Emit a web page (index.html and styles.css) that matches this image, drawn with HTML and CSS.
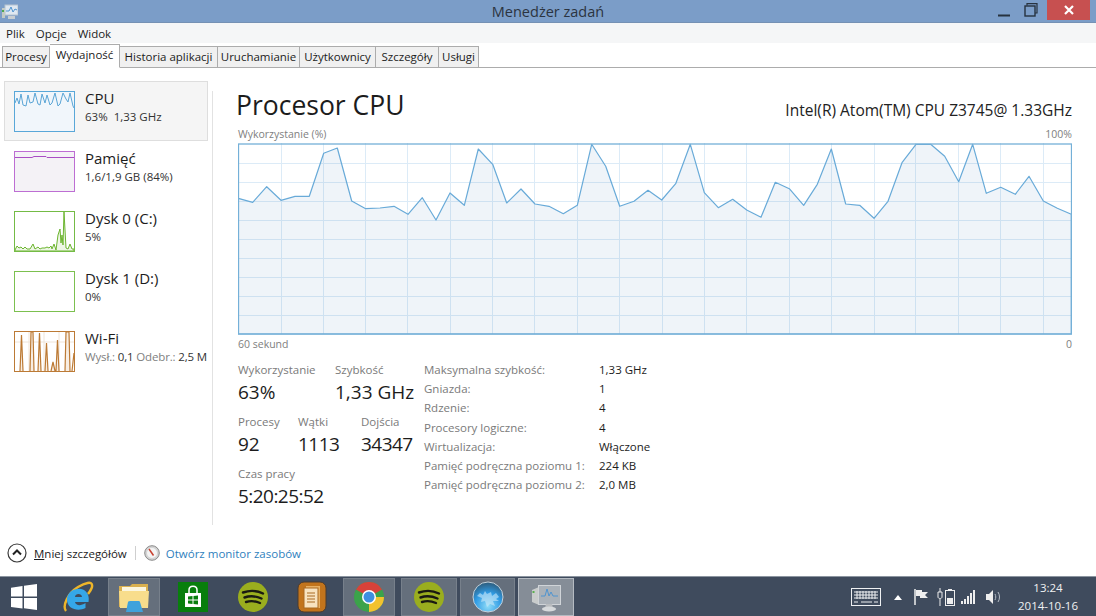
FILE: index.html
```html
<!DOCTYPE html>
<html lang="pl">
<head>
  <meta charset="UTF-8" />
  <title>Menedżer zadań</title>
  <link rel="stylesheet" href="styles.css">
</head>
<body>
  <svg class="defs" width="0" height="0">
    <symbol id="spotify" viewBox="0 0 30 30">
      <circle cx="15" cy="15" r="15" fill="#9aae1e"/>
      <path d="M5 10.500C12 8 19 8.500 25 11.500M6.500 15.500C12 13.500 18 14 23.500 16.500M8 20C13 18.500 17.500 19 22 21" fill="none" stroke="#1a1a12" stroke-width="2.400" stroke-linecap="round"/>
    </symbol>
  </svg>

  <header class="titlebar">
    <svg class="app-icon" width="16" height="16" viewBox="0 0 16 16">
      <rect x="3" y="1" width="13" height="10" fill="#dfe8f2" stroke="#b8c4cf"/>
      <path d="M4 7L7 7L9 3L11 8L13 5L15 6" fill="none" stroke="#4f94d0"/>
      <rect x="0" y="4" width="3" height="10" fill="#c4cbc4"/>
      <rect x="0" y="6" width="2" height="2" fill="#4fa84f"/>
      <rect x="6" y="12" width="7" height="3" fill="#c9ced2"/>
    </svg>
    <span class="title">Menedżer zadań</span>
    <div class="winbtns">
      <span class="winbtn"><svg width="14" height="14" viewBox="0 0 14 14"><path d="M1 12.500H13" stroke="#27323f" stroke-width="2"/></svg></span>
      <span class="winbtn"><svg width="14" height="14" viewBox="0 0 14 14"><path d="M3 2.500V.7H13V10H11" fill="none" stroke="#27323f" stroke-width="1.200"/><rect x="1" y="3" width="10" height="10" fill="none" stroke="#27323f" stroke-width="1.400"/></svg></span>
      <span class="winbtn close"><svg width="10" height="10" viewBox="0 0 10 10"><path d="M1 1L9 9M9 1L1 9" stroke="#fff" stroke-width="2.200"/></svg></span>
    </div>
  </header>

  <nav class="menu">
    <span>Plik</span><span>Opcje</span><span>Widok</span>
  </nav>

  <div class="tabs">
    <span class="tab">Procesy</span>
    <span class="tab active">Wydajność</span>
    <span class="tab">Historia aplikacji</span>
    <span class="tab">Uruchamianie</span>
    <span class="tab">Użytkownicy</span>
    <span class="tab">Szczegóły</span>
    <span class="tab">Usługi</span>
  </div>

  <div class="content">
    <aside class="sidebar">
      <div class="item selected">
        <svg class="thumb" width="61" height="41" viewBox="0 0 61 41">
          <rect x=".5" y=".5" width="60" height="40" fill="#f1f6fb"/>
          <path d="M1 12L3 7L5 13L7 3L9 14L12 15L14 4L16 12L19 11L21 2L24 13L26 14L28 3L31 12L33 4L36 14L38 12L41 2L44 15L46 13L49 2L52 8L54 11L56 2L59 15L60 17" fill="none" stroke="#5aa5d6"/>
          <rect x=".5" y=".5" width="60" height="40" fill="none" stroke="#59a7d8"/>
        </svg>
        <div class="item-text">
          <div class="item-name">CPU</div>
          <div class="item-sub">63%&nbsp; 1,33 GHz</div>
        </div>
      </div>
      <div class="item">
        <svg class="thumb" width="61" height="41" viewBox="0 0 61 41">
          <rect x=".5" y=".5" width="60" height="40" fill="#f4f2f6"/>
          <path d="M1 6.500H18L20 5.500H32L33 6.500H60" fill="none" stroke="#a94ec4"/>
          <rect x=".5" y=".5" width="60" height="40" fill="none" stroke="#bd6ed3"/>
        </svg>
        <div class="item-text">
          <div class="item-name">Pamięć</div>
          <div class="item-sub">1,6/1,9 GB (84%)</div>
        </div>
      </div>
      <div class="item">
        <svg class="thumb" width="61" height="41" viewBox="0 0 61 41">
          <rect x=".5" y=".5" width="60" height="40" fill="#fff"/>
          <path d="M1 39L3 35L5 37L7 36L9 38L11 36L13 38L16 38L19 33L21 38L24 36L26 38L28 37L31 37L33 36L35 37L37 35L38 38L40 33L42 39L44 24L46 18L47 32L48 24L49 34L50 1L52 37L54 38L56 33L58 38L60 38V40H1Z" fill="#edf6e5" stroke="#6cb52f"/>
          <rect x=".5" y=".5" width="60" height="40" fill="none" stroke="#74bb45"/>
        </svg>
        <div class="item-text">
          <div class="item-name">Dysk 0 (C:)</div>
          <div class="item-sub">5%</div>
        </div>
      </div>
      <div class="item">
        <svg class="thumb" width="61" height="41" viewBox="0 0 61 41">
          <rect x=".5" y=".5" width="60" height="40" fill="#fff" stroke="#7cc04f"/>
        </svg>
        <div class="item-text">
          <div class="item-name">Dysk 1 (D:)</div>
          <div class="item-sub">0%</div>
        </div>
      </div>
      <div class="item">
        <svg class="thumb" width="61" height="41" viewBox="0 0 61 41">
          <rect x=".5" y=".5" width="60" height="40" fill="#fff"/>
          <path d="M1 11H60M15 1V40M30 1V40M45 1V40" stroke="#efe4d8" fill="none"/>
          <path d="M6 40L7.500 4L9 40M16 40L17 1L19 1L20 40M24 40L25.500 2L27 40M31 40L32.500 12L34 40M37 40L39 31L41 40M42 40L43.500 9L45 40M51 40L52 1L55 1L56 40M58 40L60 22" fill="#f8eee3" stroke="#bc7a35" stroke-width="1.200"/>
          <rect x=".5" y=".5" width="60" height="40" fill="none" stroke="#bc7a35"/>
        </svg>
        <div class="item-text">
          <div class="item-name">Wi-Fi</div>
          <div class="item-sub wifi"><span class="muted">Wysł.:</span> 0,1 <span class="muted">Odebr.:</span> 2,5 M</div>
        </div>
      </div>
    </aside>
    <div class="divider"></div>

    <main class="main">
      <div class="heading">
        <h1>Procesor CPU</h1>
        <div class="model">Intel(R) Atom(TM) CPU Z3745@ 1.33GHz</div>
      </div>
      <div class="axis">
        <span>Wykorzystanie (%)</span><span>100%</span>
      </div>
      <svg class="graph" width="834" height="192" viewBox="238 143 834 192">
        <path class="grid" d="M238 163.500H1072M238 182.500H1072M238 201.500H1072M238 220.500H1072M238 239.500H1072M238 258.500H1072M238 277.500H1072M238 296.500H1072M238 315.500H1072M281.500 143V334M323.500 143V334M365.500 143V334M407.500 143V334M450.500 143V334M492.500 143V334M534.500 143V334M577.500 143V334M619.500 143V334M662.500 143V334M704.500 143V334M746.500 143V334M789.500 143V334M831.500 143V334M874.500 143V334M915.500 143V334M958.500 143V334M1000.500 143V334M1043.500 143V334"/>
        <path class="area" d="M238.300 198.300L252.700 202.300L266.700 186.700L281 200.300L295 196.300L309.300 196.300L323.700 153.300L337.300 148L351.700 201L365.700 208.700L380 208L394 206.300L408 214.300L422.300 197.700L436 220L450 193L464.300 205.300L478.300 149L492.700 164.300L506.700 203L521 189L535 204L549 206.300L563.300 213.700L577.300 205.300L591.700 144.300L605.700 166.300L619.700 206.300L634 201.300L648 190.300L661.700 200L675.700 183.700L690.300 144.300L704.300 192.700L718.300 207.700L732.700 199.300L746.700 210L761 217.300L775.300 182.300L789.300 188.700L803.700 205.300L817.300 184.300L831.300 149L845.700 204L859.700 205.300L874 218.300L888 201.300L902 162.700L916 144.300L930.700 144.300L944.700 156.300L958.700 181.700L972.700 144.300L986.300 193.300L1000.700 187.300L1015.300 194.300L1029 176.300L1043.300 201L1057.300 208.300L1071.300 214.300V334H238Z"/>
        <rect class="frame" x="238.500" y="144" width="833" height="190"/>
      </svg>
      <div class="axis axis-bottom">
        <span>60 sekund</span><span>0</span>
      </div>

      <div class="stats">
        <div class="stats-left">
          <div class="stat-row">
            <div class="stat s-usage"><div class="lbl">Wykorzystanie</div><div class="val">63%</div></div>
            <div class="stat"><div class="lbl">Szybkość</div><div class="val">1,33 GHz</div></div>
          </div>
          <div class="stat-row">
            <div class="stat s-proc"><div class="lbl">Procesy</div><div class="val">92</div></div>
            <div class="stat s-thr"><div class="lbl">Wątki</div><div class="val num">1113</div></div>
            <div class="stat"><div class="lbl">Dojścia</div><div class="val num">34347</div></div>
          </div>
          <div class="stat-row">
            <div class="stat"><div class="lbl">Czas pracy</div><div class="val num">5:20:25:52</div></div>
          </div>
        </div>
        <div class="specs">
          <span class="lbl">Maksymalna szybkość:</span><span>1,33 GHz</span>
          <span class="lbl">Gniazda:</span><span>1</span>
          <span class="lbl">Rdzenie:</span><span>4</span>
          <span class="lbl">Procesory logiczne:</span><span>4</span>
          <span class="lbl">Wirtualizacja:</span><span>Włączone</span>
          <span class="lbl">Pamięć podręczna poziomu 1:</span><span>224 KB</span>
          <span class="lbl">Pamięć podręczna poziomu 2:</span><span>2,0 MB</span>
        </div>
      </div>
    </main>
  </div>

  <footer class="bottom">
    <svg class="chev" width="20" height="20" viewBox="0 0 20 20">
      <circle cx="10" cy="10" r="9" fill="#fff" stroke="#3a3a3a" stroke-width="1.200"/>
      <path d="M6 11.500L10 7.500L14 11.500" fill="none" stroke="#222" stroke-width="2"/>
    </svg>
    <span class="less"><u>M</u>niej szczegółów</span>
    <span class="bottom-sep"></span>
    <svg class="gauge" width="16" height="16" viewBox="0 0 16 16">
      <circle cx="8" cy="8" r="7.300" fill="#d4d4d4" stroke="#8a8a8a"/>
      <circle cx="8" cy="8" r="5" fill="#f4f4f4"/>
      <path d="M5 4L9.500 10.500" stroke="#c8402f" stroke-width="1.500"/>
    </svg>
    <span class="link">Otwórz monitor zasobów</span>
  </footer>

  <div class="taskbar">
    <span class="task t-start">
      <svg width="26" height="26" viewBox="0 0 26 26"><path d="M0 3.700L11.500 2V12.500H0ZM13 1.800L26 0V12.500H13ZM0 14H11.500V24.500L0 23ZM13 14H26V26L13 24.200Z" fill="#fff"/></svg>
    </span>
    <span class="task t-ie">
      <svg width="32" height="32" viewBox="0 0 32 32">
        <path d="M4 30C0 25 6 12 16 6C23 2 30 0 30 4C31 7 28 10 26 13" fill="none" stroke="#edb52a" stroke-width="2.400"/>
        <path d="M26.500 21H13C14 25 19 25 23.500 22V27C16 31 5 28 5 18.500C5 10 15 6 21 8.500C26 11 27.500 16 26.500 21ZM13 16H20C20 12 13 12 13 16Z" fill="#35a7e8" fill-rule="evenodd"/>
      </svg>
    </span>
    <span class="task t-exp open">
      <svg width="32" height="30" viewBox="0 0 32 30">
        <path d="M1 4H12L14 2H30V25H1Z" fill="#d9b04f"/>
        <path d="M4 5H28V13H4Z" fill="#fbf6df"/>
        <path d="M1 9H31L30 26H2Z" fill="#f8dd8c"/>
        <path d="M8 30L10 20C10 19 12 19 13 19H20C21 19 22 19 22 20L25 30Z" fill="#3fa2dc"/>
      </svg>
    </span>
    <span class="task t-store">
      <svg width="30" height="30" viewBox="0 0 30 30">
        <rect width="30" height="30" fill="#087e0c"/>
        <path d="M7 11H23V25H7Z" fill="#fff"/>
        <path d="M11 11V8C11 3 19 3 19 8V11" fill="none" stroke="#fff" stroke-width="1.500"/>
        <path d="M10 14.500L14.500 14V17.500H10ZM15.500 14L20 13.500V17.500H15.500ZM10 18.500H14.500V22L10 21.500ZM15.500 18.500H20V22.500L15.500 22Z" fill="#087e0c"/>
      </svg>
    </span>
    <span class="task t-spot"><svg width="30" height="30"><use href="#spotify"/></svg></span>
    <span class="task t-book">
      <svg width="30" height="32" viewBox="0 0 30 32">
        <rect x="1" y="1" width="28" height="30" rx="6" fill="#c2741c" stroke="#4c3a2c"/>
        <rect x="9" y="5" width="14" height="22" fill="#e8b063"/>
        <rect x="7" y="7" width="14" height="20" fill="#f8e3c0" stroke="#a96a22"/>
        <path d="M10 12H18M10 15H18M10 18H18M10 21H18" stroke="#a96a22"/>
      </svg>
    </span>
    <span class="task t-chrome open">
      <svg width="30" height="30" viewBox="0 0 30 30">
        <circle cx="15" cy="15" r="15" fill="#3ba34a"/>
        <path d="M15 15L2 7.500A15 15 0 0 1 28 7.500Z" fill="#d8423a"/>
        <path d="M15 15H30A15 15 0 0 1 15 30Z" fill="#f2c22e"/>
        <circle cx="15" cy="15" r="7" fill="#fff"/>
        <circle cx="15" cy="15" r="5.500" fill="#3f8fe0"/>
      </svg>
    </span>
    <span class="task t-spot2 open"><svg width="30" height="30"><use href="#spotify"/></svg></span>
    <span class="task t-globe open">
      <svg width="32" height="32" viewBox="0 0 32 32">
        <defs>
          <radialGradient id="globe" cx=".5" cy=".8" r=".8">
            <stop offset="0" stop-color="#8fdcf8"/>
            <stop offset=".55" stop-color="#2f9be4"/>
            <stop offset="1" stop-color="#2f5a78"/>
          </radialGradient>
        </defs>
        <circle cx="16" cy="16" r="15" fill="url(#globe)" stroke="#c4d2dc"/>
        <path d="M5 15L8 12L11 14L13 10L15 13L19 11L20 15L24 12L27 16L24 18L27 20L21 20L23 25L18 23L15 26L13 20L9 21L10 17Z" fill="#cde9f8" opacity=".6"/>
      </svg>
    </span>
    <span class="task t-tm open">
      <svg width="30" height="30" viewBox="0 0 30 30">
        <path d="M1 8L8 5V23L1 20Z" fill="#c9cccc"/>
        <rect x="1.500" y="9" width="2" height="2" fill="#5ab04f"/>
        <rect x="7.500" y="3.500" width="22" height="19" fill="#aab1b8" stroke="#d0d4d8"/>
        <path d="M10 14H14L16 7L18 14L20 10L22 14H27" fill="none" stroke="#4f94d0"/>
        <path d="M15 22H21L22 26H14Z" fill="#b9bcbf"/>
        <ellipse cx="18" cy="27" rx="7" ry="2.500" fill="#d6d9db"/>
      </svg>
    </span>

    <div class="tray">
      <svg class="tray-kb" width="30" height="18" viewBox="0 0 30 18">
        <rect x=".5" y=".5" width="29" height="17" fill="none" stroke="#eef0f2"/>
        <path d="M3 4H27M3 7H27M3 10H27M6 3V11M9 3V11M12 3V11M15 3V11M18 3V11M21 3V11M24 3V11M3 14H7M10 14H21M23 14H27" stroke="#eef0f2" fill="none"/>
      </svg>
      <svg class="tray-up" width="8" height="5" viewBox="0 0 8 5"><path d="M0 5L4 0L8 5Z" fill="#fff"/></svg>
      <svg class="tray-flag" width="14" height="16" viewBox="0 0 14 16"><path d="M1 0V16" stroke="#eee" stroke-width="1.500"/><path d="M2 1H8V3H14L11 6L14 9H6V7H2Z" fill="#eee"/></svg>
      <svg class="tray-bat" width="18" height="18" viewBox="0 0 18 18">
        <path d="M3 0V4M1 4H5V9C5 11 1 11 1 9ZM3 11V18" stroke="#eee" fill="none"/>
        <rect x="8.500" y="2.500" width="9" height="15" fill="none" stroke="#eee"/>
        <rect x="11" y="1" width="4" height="1.500" fill="#eee"/>
        <rect x="10" y="10" width="6" height="6" fill="#eee"/>
      </svg>
      <svg class="tray-sig" width="14" height="14" viewBox="0 0 14 14"><path d="M0 11H2V14H0ZM3 9H5V14H3ZM6 6H8V14H6ZM9 3H11V14H9ZM12 0H14V14H12Z" fill="#eee"/></svg>
      <svg class="tray-vol" width="16" height="14" viewBox="0 0 16 14"><path d="M0 4H3L7 0V14L3 10H0Z" fill="#eee"/><path d="M9 4C10 6 10 8 9 10M12 2C14 5 14 9 12 12" fill="none" stroke="#b5bcc5"/></svg>
      <div class="clock"><div>13:24</div><div>2014-10-16</div></div>
    </div>
  </div>
</body>
</html>
```

FILE: styles.css
```css
* {
  box-sizing: border-box;
  margin: 0;
  padding: 0;
}

html, body {
  width: 1096px;
  height: 616px;
  overflow: hidden;
}

body {
  display: flex;
  flex-direction: column;
  background: #fff;
  color: #1c1c1c;
  font-family: "Open Sans", "Noto Sans", sans-serif;
  font-size: 11.5px;
}

.defs {
  position: absolute;
}

/* title bar */
.titlebar {
  display: flex;
  position: relative;
  flex: 0 0 23px;
  align-items: flex-start;
  justify-content: center;
  background: #7b9dc8;
  border-bottom: 1px solid #7591b4;
}

.app-icon {
  position: absolute;
  left: 2px;
  top: 4px;
}

.title {
  height: 22px;
  font-size: 14.5px;
  line-height: 24px;
  color: #2b3440;
}

.winbtns {
  display: flex;
  position: absolute;
  right: 6px;
  top: 0;
}

.winbtn {
  display: flex;
  align-items: center;
  justify-content: center;
  width: 27px;
  height: 20px;
}

.winbtn.close {
  width: 43px;
  margin-left: 3px;
  background: #c75050;
}

/* menu and tabs */
.menu {
  display: flex;
  flex: 0 0 20px;
  gap: 11px;
  align-items: center;
  padding-left: 6px;
  background: #f5f6f7;
}

.tabs {
  display: flex;
  flex: 0 0 25px;
  align-items: flex-end;
  padding-left: 2px;
  border-bottom: 1px solid #acacac;
}

.tab {
  height: 22px;
  margin-bottom: -1px;
  background: #f0f0f0;
  border: 1px solid #acacac;
  border-left-width: 0;
  line-height: 20px;
  text-align: center;
  white-space: nowrap;
}

.tab:nth-child(1) { width: 48px; border-left-width: 1px; }
.tab:nth-child(2) { width: 70px; }
.tab:nth-child(3) { width: 98px; }
.tab:nth-child(4) { width: 82px; }
.tab:nth-child(5) { width: 76px; }
.tab:nth-child(6) { width: 63px; }
.tab:nth-child(7) { width: 40px; }

.tab.active {
  position: relative;
  height: 24px;
  background: #fff;
  border-bottom-color: #fff;
}

/* left list */
.content {
  display: flex;
  flex: 1;
  min-height: 0;
}

.sidebar {
  flex: 0 0 212px;
  padding: 13px 4px 0;
  overflow: hidden;
}

.item {
  display: flex;
  width: 206px;
  height: 60px;
  padding: 10px 0 0 10px;
}

.item.selected {
  width: 204px;
  background: #f5f5f5;
  box-shadow: inset 0 0 0 1px #dedede;
}

.thumb {
  flex: none;
}

.item-text {
  padding-left: 10px;
  white-space: nowrap;
}

.item-name {
  margin-top: -1px;
  font-size: 15px;
  line-height: 17px;
}

.item-sub {
  margin-top: 2px;
  line-height: 16px;
  color: #333;
}

.wifi {
  letter-spacing: -0.15px;
}

.muted {
  color: #808080;
}

.divider {
  flex: 0 0 1px;
  margin: 23px 0 3px;
  background: #e2e2e2;
}

/* main panel */
.main {
  flex: 1;
  padding: 0 24px 0 25px;
}

.heading {
  display: flex;
  align-items: center;
  justify-content: space-between;
  height: 59px;
  padding-top: 14px;
}

.heading h1 {
  margin-left: -2px;
  font-size: 26.5px;
  font-weight: 400;
}

.model {
  margin-top: 10px;
  font-size: 15.5px;
  color: #222;
}

.axis {
  display: flex;
  justify-content: space-between;
  height: 16px;
  font-size: 10.5px;
  line-height: 15px;
  color: #808080;
}

.axis-bottom {
  height: 18px;
  line-height: 18px;
}

.graph {
  display: block;
}

.grid {
  fill: none;
  stroke: #dcebf7;
}

.area {
  fill: rgba(30, 100, 170, 0.07);
  stroke: #68aad8;
  stroke-width: 1.2;
  stroke-linejoin: round;
}

.frame {
  fill: none;
  stroke: #74b0d8;
  stroke-width: 1.3;
}

/* stats under the graph */
.stats {
  display: flex;
  margin-top: 8px;
}

.stats-left {
  flex: 0 0 186px;
}

.stat-row {
  display: flex;
  height: 52px;
}

.s-usage {
  flex: 0 0 97px;
}

.s-proc {
  flex: 0 0 60px;
}

.s-thr {
  flex: 0 0 63px;
}

.lbl {
  color: #7a7a7a;
}

.stat .lbl {
  line-height: 17px;
}

.val {
  padding-top: 1px;
  font-size: 19px;
  line-height: 26px;
  white-space: nowrap;
}

.val.num {
  letter-spacing: -0.55px;
}

.specs {
  display: grid;
  grid-template-columns: 175px auto;
  grid-auto-rows: 19.2px;
  align-items: center;
  align-content: start;
  margin-top: -1px;
}

/* footer */
.bottom {
  display: flex;
  flex: 0 0 48px;
  align-items: center;
  padding: 2px 0 0 7px;
}

.less {
  margin-left: 7px;
}

.bottom-sep {
  width: 1px;
  height: 14px;
  margin: 0 8px;
  background: #cfcfcf;
}

.link {
  margin-left: 6px;
  color: #2f7fbd;
}

/* taskbar */
.taskbar {
  display: flex;
  flex: 0 0 40px;
  align-items: stretch;
  padding-top: 1px;
  background: #3f4b5d;
  border-top: 1px solid #8c95a0;
}

.task {
  display: flex;
  flex: none;
  align-items: center;
  justify-content: center;
}

.task.open {
  background: #656f7c;
  border: 1px solid #77808b;
}

.t-start { width: 48px; }
.t-ie { width: 60px; }
.t-exp { width: 52px; margin-right: 3px; }
.t-store { width: 60px; }
.t-spot { width: 59px; }
.t-book { width: 60px; }
.t-chrome { width: 52px; margin: 0 6px 0 1px; }
.t-spot2 { width: 56px; margin-right: 3px; }
.t-globe { width: 55px; margin-right: 3px; }

.task.t-tm {
  width: 56px;
  background: #858d97;
  border-color: #b4bac1;
}

.tray {
  display: flex;
  flex: 1;
  align-items: center;
  justify-content: flex-end;
  color: #f0f1f2;
}

.tray-up { margin-left: 13px; }
.tray-flag { margin-left: 12px; }
.tray-bat { margin-left: 9px; }
.tray-sig { margin-left: 6px; }
.tray-vol { margin-left: 11px; }

.clock {
  width: 80px;
  margin-left: 6px;
  margin-right: 8px;
  text-align: center;
  line-height: 18px;
}
```
